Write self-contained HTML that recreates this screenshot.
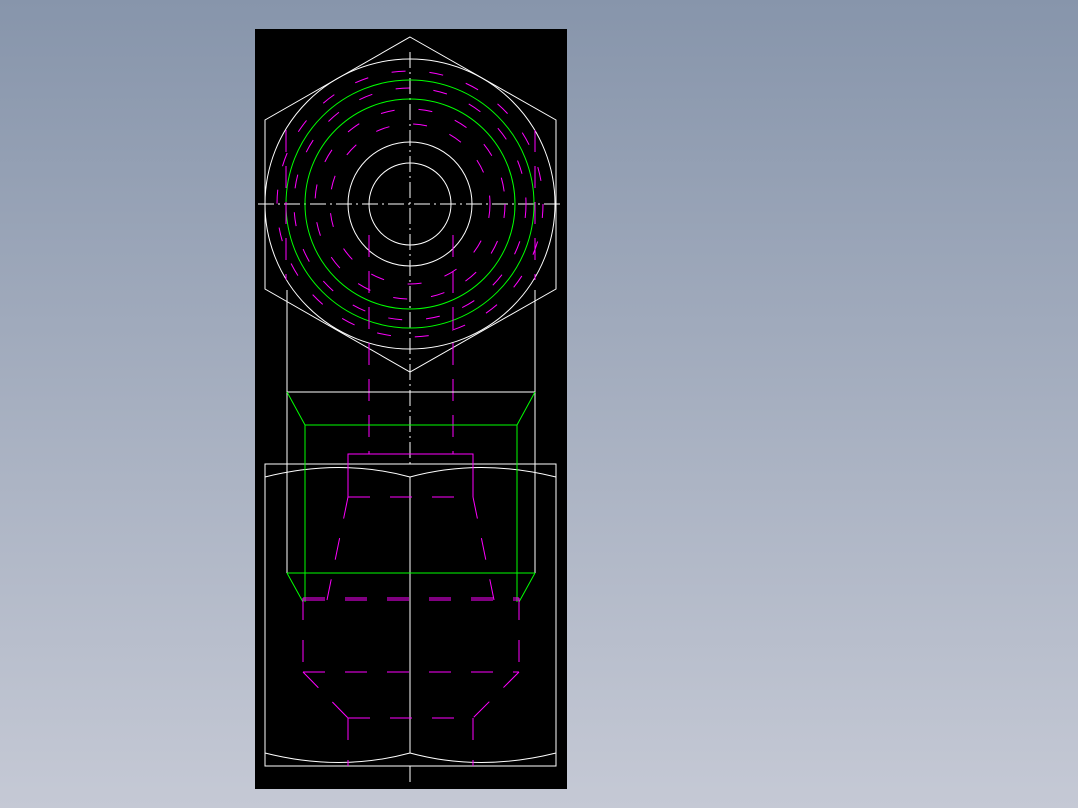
<!DOCTYPE html>
<html><head><style>
html,body{margin:0;padding:0;width:1078px;height:808px;overflow:hidden;background:linear-gradient(#8795ab,#c5c9d5);}
svg{position:absolute;left:0;top:0}
</style></head><body>
<svg width="1078" height="808" viewBox="0 0 1078 808" fill="none" stroke-width="1" shape-rendering="crispEdges">
<rect x="255" y="29" width="312" height="760" fill="#000" stroke="none"/>
<g stroke="#fff" shape-rendering="auto">
<polygon points="410,37 556,120 556,289 410,372 265,289 265,120"/>
<circle cx="410" cy="204" r="145"/>
<circle cx="410" cy="204" r="62"/>
<circle cx="410" cy="204" r="41"/>
</g>
<g stroke="#fff" stroke-dasharray="16,4,2,4">
<line x1="258" y1="204" x2="563" y2="204"/>
<line x1="410" y1="52" x2="410" y2="464"/>
<line x1="410" y1="766" x2="410" y2="782"/>
</g>
<g stroke="#00ff00" shape-rendering="auto">
<circle cx="410" cy="204" r="124"/>
<circle cx="410" cy="204" r="105"/>
</g>
<g stroke="#ff00ff" stroke-dasharray="14,24" shape-rendering="auto">
<circle cx="410" cy="204" r="116"/>
<circle cx="410" cy="204" r="95"/>
<circle cx="410" cy="204" r="80"/>
<circle cx="410" cy="204" r="133"/>
</g>
<g stroke="#ff00ff" stroke-dasharray="22,14">
<line x1="369" y1="235" x2="369" y2="454"/>
<line x1="453" y1="235" x2="453" y2="454"/>
<line x1="286" y1="130" x2="286" y2="280"/>
<line x1="535" y1="130" x2="535" y2="280"/>
</g>
<g stroke="#fff">
<line x1="287" y1="290" x2="287" y2="573"/>
<line x1="535" y1="290" x2="535" y2="573"/>
<line x1="287" y1="392" x2="535" y2="392"/>
<rect x="265" y="464" width="291" height="302"/>
<line x1="410" y1="477" x2="410" y2="753"/>
</g>
<g stroke="#fff" shape-rendering="auto">
<path d="M265,477 Q340,458 410,477 Q480,458 556,477"/>
<path d="M265,753 Q340,772 410,753 Q480,772 556,753"/>
</g>
<g stroke="#00ff00" shape-rendering="auto">
<path d="M287,392 L305,425 L517,425 L535,392"/>
<path d="M305,425 L305,602"/>
<path d="M517,425 L517,602"/>
<path d="M287,573 L535,573"/>
<path d="M287,573 L303,602 M535,573 L519,602"/>
</g>
<g stroke="#ff00ff" stroke-dasharray="22,20" shape-rendering="auto">
<path d="M348,497 L348,454 L473,454 L473,497" stroke-dasharray="none"/>
<line x1="348" y1="497" x2="473" y2="497"/>
<line x1="348" y1="497" x2="327" y2="600"/>
<line x1="473" y1="497" x2="494" y2="600"/>
<line x1="303" y1="598" x2="519" y2="598"/>
<line x1="303" y1="600" x2="519" y2="600"/>
<line x1="303" y1="598" x2="303" y2="672"/>
<line x1="519" y1="598" x2="519" y2="672"/>
<line x1="303" y1="672" x2="519" y2="672"/>
<line x1="303" y1="672" x2="348" y2="718"/>
<line x1="519" y1="672" x2="473" y2="718"/>
<line x1="348" y1="718" x2="473" y2="718"/>
<line x1="348" y1="718" x2="348" y2="766"/>
<line x1="473" y1="718" x2="473" y2="766"/>
</g>
</svg>
</body></html>
